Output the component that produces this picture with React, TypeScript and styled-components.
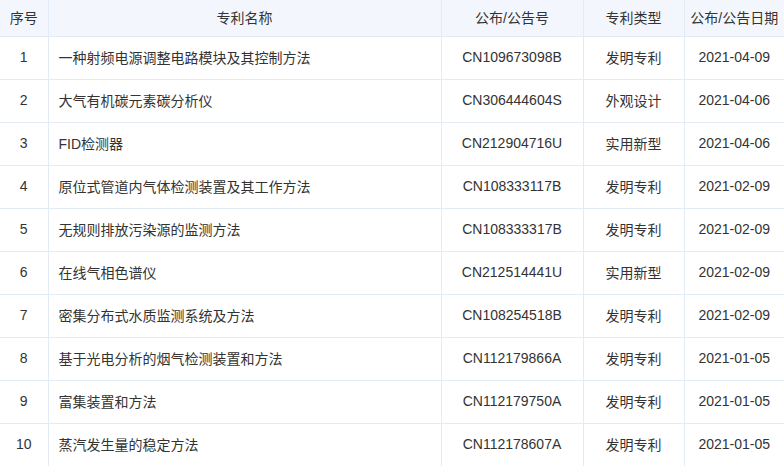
import styled, { createGlobalStyle } from 'styled-components';

const GlobalStyle = createGlobalStyle`
  html, body {
    margin: 0;
    padding: 0;
    background: #ffffff;
    font-family: "Liberation Sans", "Noto Sans CJK SC", sans-serif;
  }
`;

const patents = [
  { no: 1, name: '一种射频电源调整电路模块及其控制方法', code: 'CN109673098B', type: '发明专利', date: '2021-04-09' },
  { no: 2, name: '大气有机碳元素碳分析仪', code: 'CN306444604S', type: '外观设计', date: '2021-04-06' },
  { no: 3, name: 'FID检测器', code: 'CN212904716U', type: '实用新型', date: '2021-04-06' },
  { no: 4, name: '原位式管道内气体检测装置及其工作方法', code: 'CN108333117B', type: '发明专利', date: '2021-02-09' },
  { no: 5, name: '无规则排放污染源的监测方法', code: 'CN108333317B', type: '发明专利', date: '2021-02-09' },
  { no: 6, name: '在线气相色谱仪', code: 'CN212514441U', type: '实用新型', date: '2021-02-09' },
  { no: 7, name: '密集分布式水质监测系统及方法', code: 'CN108254518B', type: '发明专利', date: '2021-02-09' },
  { no: 8, name: '基于光电分析的烟气检测装置和方法', code: 'CN112179866A', type: '发明专利', date: '2021-01-05' },
  { no: 9, name: '富集装置和方法', code: 'CN112179750A', type: '发明专利', date: '2021-01-05' },
  { no: 10, name: '蒸汽发生量的稳定方法', code: 'CN112178607A', type: '发明专利', date: '2021-01-05' },
];

export default function App(): JSX.Element {
  return (
    <>
      <GlobalStyle />
      <TableContainer>
        <colgroup>
          <col style={{ width: 48 }} />
          <col style={{ width: 393 }} />
          <col style={{ width: 142 }} />
          <col style={{ width: 101 }} />
          <col style={{ width: 100 }} />
        </colgroup>
        <thead>
          <HeaderRow>
            <HeaderCell>序号</HeaderCell>
            <HeaderCell>专利名称</HeaderCell>
            <HeaderCell>公布/公告号</HeaderCell>
            <HeaderCell>专利类型</HeaderCell>
            <HeaderCell>公布/公告日期</HeaderCell>
          </HeaderRow>
        </thead>
        <tbody>
          {patents.map((p) => (
            <Row key={p.no}>
              <DataCell>{p.no}</DataCell>
              <DataCell $left>{p.name}</DataCell>
              <DataCell>{p.code}</DataCell>
              <DataCell>{p.type}</DataCell>
              <DataCell>{p.date}</DataCell>
            </Row>
          ))}
        </tbody>
      </TableContainer>
    </>
  );
}

const TableContainer = styled.table`
  width: 784px;
  table-layout: fixed;
  border-collapse: collapse;
  font-size: 14px;
  color: #333333;
`;

const HeaderRow = styled.tr`
  height: 36px;
  background-color: #f3f7fd;
  border-bottom: 1px solid #e3ebf7;
`;

const HeaderCell = styled.th`
  font-weight: normal;
  text-align: center;
  padding: 0 0 1px;
  color: #333333;
  &:not(:last-child) {
    border-right: 1px solid #e3ebf7;
  }
`;

const Row = styled.tr`
  height: 43px;
  border-bottom: 1px solid #e3ebf7;
`;

const DataCell = styled.td<{ $left?: boolean }>`
  text-align: ${(p) => (p.$left ? 'left' : 'center')};
  padding: ${(p) => (p.$left ? '0 10px 2px' : '0 0 2px')};
  white-space: nowrap;
  &:not(:last-child) {
    border-right: 1px solid #e3ebf7;
  }
`;
